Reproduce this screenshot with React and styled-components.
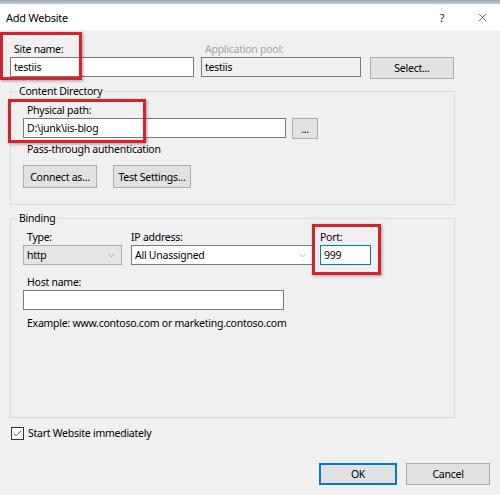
import React from 'react'
import styled, { createGlobalStyle } from 'styled-components'
import { ChevronDown, X, Check } from 'lucide-react'

const GlobalStyle = createGlobalStyle`
    body {
        margin: 0;
        background: #f0f0f0;
        font-family: "Noto Sans", "Open Sans", sans-serif;
        font-size: 10.5px;
        letter-spacing: -0.25px;
        color: #000;
    }
`

const Window = styled.div`
    width: 500px;
    height: 495px;
    display: flex;
    flex-direction: column;
    position: relative;
    overflow: hidden;
    background: #f0f0f0;
`

const TopEdge = styled.div`
    height: 4px;
    background: linear-gradient(#9aa8b6, #c3ccd5);
`

const TitleBar = styled.div`
    height: 26px;
    background: #fff;
    display: flex;
    align-items: center;
    padding-left: 6px;
    font-size: 11px;
`

const Title = styled.span`
    flex: 1;
`

const TitleButton = styled.span`
    width: ${p => p.$w}px;
    display: flex;
    justify-content: center;
    align-items: center;
    color: #222;
`

const Body = styled.div`
    display: flex;
    flex-direction: column;
    padding: 11px 10px 0 10px;
`

const Row = styled.div`
    display: flex;
    align-items: flex-end;
    gap: ${p => p.$gap || 0}px;
`

const Field = styled.div`
    display: flex;
    flex-direction: column;
    width: ${p => p.$w}px;
`

const Label = styled.div`
    line-height: 16px;
    height: 16px;
    padding-left: ${p => (p.$indent === undefined ? 4 : p.$indent)}px;
    color: ${p => (p.$disabled ? '#a3a3a3' : '#000')};
    white-space: nowrap;
`

const TextBox = styled.input`
    box-sizing: border-box;
    width: 100%;
    height: 20px;
    margin: 0;
    padding: 0 3px;
    font: inherit;
    letter-spacing: inherit;
    color: #000;
    background: ${p => (p.$disabled ? '#f0f0f0' : '#fff')};
    border: 1px solid ${p => (p.$focus ? '#0078d7' : '#7a7a7a')};
    outline: none;
`

const Button = styled.button`
    box-sizing: border-box;
    width: ${p => p.$w}px;
    height: ${p => p.$h || 22}px;
    margin: 0;
    padding: 0;
    font: inherit;
    letter-spacing: inherit;
    color: #000;
    background: #e1e1e1;
    border: ${p => (p.$default ? '2px solid #0078d7' : '1px solid #adadad')};
    display: flex;
    align-items: center;
    justify-content: center;
`

const Group = styled.fieldset`
    box-sizing: border-box;
    width: 445px;
    height: ${p => p.$h}px;
    margin: ${p => p.$top}px 0 0 0;
    padding: 0 6px 0 6px;
    border: 1px solid #dcdcdc;
    min-inline-size: 0;
`

const Legend = styled.legend`
    padding: 0 2px;
    line-height: 16px;
`

const GroupInner = styled.div`
    display: flex;
    flex-direction: column;
    padding: 3px 6px 0 6px;
`

const Note = styled.div`
    line-height: 16px;
    padding-left: 4px;
    margin-top: ${p => p.$top || 0}px;
`

const Combo = styled.div`
    box-sizing: border-box;
    width: 100%;
    height: 20px;
    display: flex;
    align-items: center;
    justify-content: space-between;
    padding: 0 4px 0 3px;
    background: ${p => (p.$flat ? '#e5e5e5' : '#fff')};
    border: 1px solid ${p => (p.$flat ? '#acacac' : '#7a7a7a')};
`

const Highlight = styled.div`
    position: absolute;
    left: ${p => p.$x}px;
    top: ${p => p.$y}px;
    width: ${p => p.$w}px;
    height: ${p => p.$h}px;
    box-sizing: border-box;
    border: 3px solid #d3232b;
    box-shadow: 1px 1px 3px rgba(0, 0, 0, 0.35);
    pointer-events: none;
`

const CheckRow = styled.label`
    display: flex;
    align-items: center;
    gap: 4px;
    margin: 7px 0 0 1px;
    line-height: 16px;
`

const CheckBox = styled.span`
    box-sizing: border-box;
    width: 13px;
    height: 13px;
    border: 1px solid #333;
    background: #fff;
    display: flex;
    align-items: center;
    justify-content: center;
`

const Footer = styled.div`
    display: flex;
    justify-content: flex-end;
    gap: 9px;
    margin-top: 22px;
`

const App = () => {
    return (
        <>
            <GlobalStyle />
            <Window>
                <TopEdge />
                <TitleBar>
                    <Title>Add Website</Title>
                    <TitleButton $w={44}>?</TitleButton>
                    <TitleButton $w={36}>
                        <X size={13} strokeWidth={1.2} />
                    </TitleButton>
                </TitleBar>
                <Body>
                    <Row>
                        <Field $w={184}>
                            <Label>Site name:</Label>
                            <TextBox defaultValue="testiis" />
                        </Field>
                        <Field $w={160} style={{ marginLeft: 7 }}>
                            <Label $disabled>Application pool:</Label>
                            <TextBox $disabled defaultValue="testiis" readOnly />
                        </Field>
                        <Button $w={84} style={{ marginLeft: 9, marginBottom: -2 }}>Select...</Button>
                    </Row>

                    <Group $top={6} $h={122}>
                        <Legend>Content Directory</Legend>
                        <GroupInner>
                            <Row $gap={6}>
                                <Field $w={263}>
                                    <Label>Physical path:</Label>
                                    <TextBox defaultValue="D:\junk\iis-blog" />
                                </Field>
                                <Button $w={26} $h={21} style={{ marginBottom: -1 }}>...</Button>
                            </Row>
                            <Note $top={3}>Pass-through authentication</Note>
                            <Row $gap={16} style={{ marginTop: 8 }}>
                                <Button $w={74} $h={23}>Connect as...</Button>
                                <Button $w={78} $h={23}>Test Settings...</Button>
                            </Row>
                        </GroupInner>
                    </Group>

                    <Group $top={5} $h={208}>
                        <Legend>Binding</Legend>
                        <GroupInner>
                            <Row>
                                <Field $w={99}>
                                    <Label>Type:</Label>
                                    <Combo $flat>
                                        <span>http</span>
                                        <ChevronDown size={11} strokeWidth={1.2} color="#777" />
                                    </Combo>
                                </Field>
                                <Field $w={182} style={{ marginLeft: 9 }}>
                                    <Label $indent={0}>IP address:</Label>
                                    <Combo>
                                        <span>All Unassigned</span>
                                        <ChevronDown size={11} strokeWidth={1.2} color="#777" />
                                    </Combo>
                                </Field>
                                <Field $w={51} style={{ marginLeft: 7 }}>
                                    <Label $indent={0}>Port:</Label>
                                    <TextBox $focus defaultValue="999" />
                                </Field>
                            </Row>
                            <Field $w={261} style={{ marginTop: 9 }}>
                                <Label>Host name:</Label>
                                <TextBox defaultValue="" />
                            </Field>
                            <Note $top={5}>Example: www.contoso.com or marketing.contoso.com</Note>
                        </GroupInner>
                    </Group>

                    <CheckRow>
                        <CheckBox>
                            <Check size={11} strokeWidth={1.6} color="#222" />
                        </CheckBox>
                        Start Website immediately
                    </CheckRow>

                    <Footer>
                        <Button $w={78} $default>OK</Button>
                        <Button $w={84}>Cancel</Button>
                    </Footer>
                </Body>

                <Highlight $x={0} $y={32} $w={82} $h={48} />
                <Highlight $x={8} $y={99} $w={138} $h={44} />
                <Highlight $x={312} $y={224} $w={69} $h={51} />
            </Window>
        </>
    )
}

export default App
